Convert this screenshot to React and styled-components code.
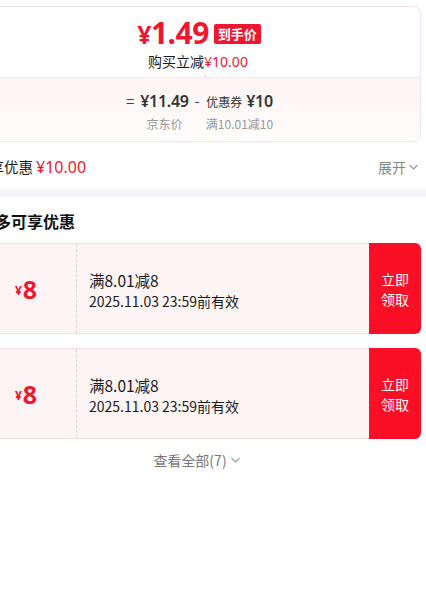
import React from "react"
import styled, { createGlobalStyle } from "styled-components"

const red = "#f0162f"
const cjk = `"Noto Sans CJK SC", "Noto Sans", sans-serif`
const num = `"Noto Sans", "Noto Sans CJK SC", sans-serif`

const Global = createGlobalStyle`
  html, body { margin: 0; background: #fff; overflow: hidden; }
  body { font-family: ${cjk}; color: #1a1a1a; }
`

const Page = styled.div`
  width: 456px;
  margin-left: -30px;
  padding: 6px 5px 0;
  box-sizing: border-box;
`

const Card = styled.div`
  border: 1px solid #f6e2e6;
  border-radius: 8px;
  overflow: hidden;
`

const Top = styled.div`
  height: 71px;
  position: relative;
  display: flex;
  flex-direction: column;
  align-items: center;
  padding-top: 10px;
  box-sizing: border-box;
  border-bottom: 1px solid #f8e8ea;
  &::after {
    content: "";
    position: absolute;
    left: 225px;
    bottom: -1px;
    border: 4px solid transparent;
    border-bottom-color: #f8e8ea;
  }
`

const PriceLine = styled.div`
  display: flex;
  align-items: center;
  height: 32px;
  gap: 5px;
  padding-left: 2px;
`

const Price = styled.span`
  font-family: ${num};
  font-weight: 700;
  color: ${red};
  font-size: 30px;
  letter-spacing: -0.5px;
  line-height: 30px;
  span { font-size: 25px; }
`

const Badge = styled.span`
  background: ${red};
  color: #fff;
  font-size: 13px;
  font-weight: 700;
  padding: 0 4px;
  height: 20px;
  line-height: 20px;
  border-radius: 2px;
  margin-top: 2px;
`

const Sub = styled.div`
  font-size: 14px;
  line-height: 18px;
  margin-top: 3px;
  color: #1a1a1a;
  em { font-style: normal; color: ${red}; font-family: ${num}; }
`

const Bottom = styled.div`
  height: 63px;
  background: linear-gradient(180deg, #fdf5f6 0%, #fffcfc 100%);
  display: flex;
  justify-content: center;
  align-items: flex-start;
  padding: 11px 0 0 3px;
  box-sizing: border-box;
  gap: 6px;
`

const Term = styled.div`
  display: flex;
  flex-direction: column;
  align-items: center;
`

const Value = styled.div`
  height: 24px;
  display: flex;
  align-items: center;
  gap: 4px;
  color: #333;
  font-size: 12px;
  b { font-family: ${num}; font-size: 16px; font-weight: 600; letter-spacing: -0.3px; }
`

const Op = styled.div`
  height: 24px;
  line-height: 24px;
  font-size: 15px;
  color: #444;
`

const Label = styled.div`
  font-size: 12px;
  color: #999;
  line-height: 16px;
  margin-top: 3px;
`

const Row = styled.div`
  height: 47px;
  display: flex;
  align-items: center;
  justify-content: space-between;
  padding: 3px 2px 0 0;
  box-sizing: border-box;
  font-size: 14.5px;
  em { font-style: normal; color: ${red}; font-family: ${num}; font-size: 16px; margin-left: 3px; }
`

const Toggle = styled.span`
  color: #888;
  font-size: 14px;
  display: flex;
  align-items: center;
  gap: 2px;
`

const Band = styled.div`
  height: 8px;
  background: #f5f6fa;
  margin: 0 -5px;
`

const Heading = styled.div`
  height: 46px;
  display: flex;
  align-items: center;
  padding: 2px 0 0 4px;
  box-sizing: border-box;
  font-size: 16px;
  font-weight: 700;
  color: #111;
`

const Coupons = styled.div`
  display: flex;
  flex-direction: column;
  gap: 14px;
`

const Coupon = styled.div`
  height: 91px;
  display: flex;
  background: #fdf4f5;
  border: 1px solid #f1dfe2;
  border-right: none;
  border-radius: 6px;
  box-sizing: border-box;
`

const Amount = styled.div`
  width: 100px;
  flex-shrink: 0;
  border-right: 1px dashed #e9cfd3;
  display: flex;
  align-items: center;
  justify-content: center;
  color: ${red};
  font-family: ${num};
  font-weight: 700;
  font-size: 25px;
  span { font-size: 12px; margin-right: 1px; margin-top: 3px; }
`

const Info = styled.div`
  flex: 1;
  display: flex;
  flex-direction: column;
  justify-content: center;
  padding: 5px 0 0 12px;
  font-size: 15.5px;
  line-height: 21px;
  color: #1a1a1a;
  small { font-size: 14px; display: block; }
`

const Claim = styled.button`
  width: 52px;
  margin: -1px 0;
  border: none;
  background: #fb0f27;
  color: #fff;
  font-family: ${cjk};
  font-size: 14px;
  line-height: 20px;
  border-radius: 0 6px 6px 0;
  padding: 0 10px;
`

const More = styled.div`
  height: 42px;
  display: flex;
  align-items: center;
  justify-content: center;
  gap: 3px;
  color: #777;
  font-size: 14px;
  padding-right: 2px;
`

const Chevron = () => (
  <svg width="11" height="10" viewBox="0 0 11 10">
    <path d="M1.5 3 L5.5 7 L9.5 3" fill="none" stroke="#999" strokeWidth="1.1" />
  </svg>
)

const coupons = [
  { amount: 8, rule: "满8.01减8", until: "2025.11.03 23:59前有效" },
  { amount: 8, rule: "满8.01减8", until: "2025.11.03 23:59前有效" }
]

export default function App() {
  return (
    <>
      <Global />
      <Page>
        <Card>
          <Top>
            <PriceLine>
              <Price><span>¥</span>1.49</Price>
              <Badge>到手价</Badge>
            </PriceLine>
            <Sub>购买立减<em>¥10.00</em></Sub>
          </Top>
          <Bottom>
            <Op>=</Op>
            <Term>
              <Value><b>¥11.49</b></Value>
              <Label>京东价</Label>
            </Term>
            <Op>-</Op>
            <Term>
              <Value>优惠券<b>¥10</b></Value>
              <Label>满10.01减10</Label>
            </Term>
          </Bottom>
        </Card>
        <Row>
          <span>已享优惠<em>¥10.00</em></span>
          <Toggle>展开<Chevron /></Toggle>
        </Row>
        <Band />
        <Heading>最多可享优惠</Heading>
        <Coupons>
          {coupons.map((c, i) => (
            <Coupon key={i}>
              <Amount><span>¥</span>{c.amount}</Amount>
              <Info>
                {c.rule}
                <small>{c.until}</small>
              </Info>
              <Claim>立即领取</Claim>
            </Coupon>
          ))}
        </Coupons>
        <More>查看全部(7)<Chevron /></More>
      </Page>
    </>
  )
}
